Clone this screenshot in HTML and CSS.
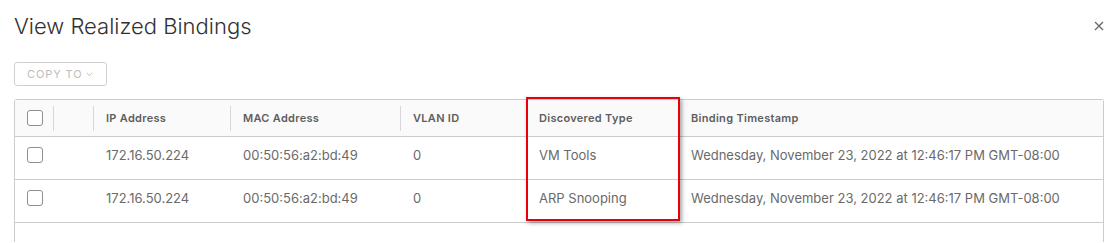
FILE: index.html
```html
<!DOCTYPE html>
<html>
<head>
<meta charset="utf-8">
<link rel="stylesheet" href="styles.css">
</head>
<body>
<div class="modal">
  <div class="modal-header">
    <h1 class="title">View Realized Bindings</h1>
    <button class="close" aria-label="Close">
      <svg width="10" height="10" viewBox="0 0 10 10"><path d="M1 1L9 9M9 1L1 9" stroke="#666" stroke-width="1.3" fill="none"/></svg>
    </button>
  </div>
  <div class="toolbar">
    <button class="btn-copy">COPY TO <svg width="7" height="5" viewBox="0 0 7 5"><path d="M0.8 1L3.5 3.6L6.2 1" stroke="#bdbdbd" stroke-width="1" fill="none"/></svg></button>
  </div>
  <div class="grid">
    <div class="row head">
      <div class="cell c-check"><span class="cb"></span></div>
      <div class="cell sep"></div>
      <div class="cell sep">IP Address</div>
      <div class="cell sep">MAC Address</div>
      <div class="cell sep">VLAN ID</div>
      <div class="cell sep">Discovered Type</div>
      <div class="cell sep">Binding Timestamp</div>
    </div>
    <div class="row">
      <div class="cell c-check"><span class="cb"></span></div>
      <div class="cell"></div>
      <div class="cell">172.16.50.224</div>
      <div class="cell">00:50:56:a2:bd:49</div>
      <div class="cell">0</div>
      <div class="cell">VM Tools</div>
      <div class="cell">Wednesday, November 23, 2022 at 12:46:17 PM GMT-08:00</div>
    </div>
    <div class="row">
      <div class="cell c-check"><span class="cb"></span></div>
      <div class="cell"></div>
      <div class="cell">172.16.50.224</div>
      <div class="cell">00:50:56:a2:bd:49</div>
      <div class="cell">0</div>
      <div class="cell">ARP Snooping</div>
      <div class="cell">Wednesday, November 23, 2022 at 12:46:17 PM GMT-08:00</div>
    </div>
    <div class="row empty"></div>
    <div class="highlight"></div>
  </div>
</div>
</body>
</html>
```

FILE: styles.css
```css
html, body {
  margin: 0;
  padding: 0;
  background: #fff;
  overflow: hidden;
}
body {
  font-family: Inter, "Open Sans", sans-serif;
  color: #565656;
}
.modal {
  padding: 0 15px 0 14px;
}
.modal-header {
  display: flex;
  justify-content: space-between;
  align-items: flex-start;
  height: 50px;
}
.title {
  margin: 12px 0 0 0;
  font-weight: 300;
  font-size: 22px;
  line-height: 28px;
  color: #313131;
  letter-spacing: 0;
}
.close {
  margin: 21px 0 0 0;
  padding: 0;
  border: 0;
  background: none;
  width: 10px;
  height: 10px;
  display: flex;
}
.toolbar {
  height: 49px;
  padding-top: 12px;
  box-sizing: border-box;
}
.btn-copy {
  box-sizing: border-box;
  width: 93px;
  height: 24px;
  border: 1px solid #cfcfcf;
  border-radius: 3px;
  background: #fff;
  color: #bdbdbd;
  font-family: Inter, sans-serif;
  font-size: 11px;
  letter-spacing: 0.9px;
  padding: 0 0 0 12px;
  display: flex;
  align-items: center;
  gap: 3px;
}
.grid {
  position: relative;
  border: 1px solid #cccccc;
  border-bottom: 0;
  border-radius: 3px 3px 0 0;
  height: 143px;
  box-sizing: border-box;
}
.row {
  display: grid;
  grid-template-columns: 38px 40px 137px 170px 126px 152px 1fr;
  height: 42px;
  border-bottom: 1px solid #cccccc;
  font-size: 13px;
}
.row.head {
  height: 36px;
  background: #fafafa;
  font-size: 11px;
  font-weight: 600;
  color: #666666;
  letter-spacing: 0.3px;
  align-items: center;
}
.cell {
  padding: 10px 0 0 13px;
  line-height: 16px;
  white-space: nowrap;
  color: #6a6a6a;
}
.row.head .cell {
  padding: 0 0 0 12px;
  height: 25px;
  display: flex;
  align-items: center;
  color: #5e5e5e;
}
.row.head .c-check {
  padding-left: 12px;
}
.row.head .sep {
  border-left: 1px solid #d7d7d7;
}
.c-check {
  padding-top: 10px;
  padding-left: 12px;
}
.cb {
  display: block;
  box-sizing: border-box;
  width: 16px;
  height: 16px;
  border: 1px solid #8f8f8f;
  border-radius: 3px;
  background: #fff;
}
.row.empty {
  border-bottom: 0;
  height: 20px;
}
.highlight {
  position: absolute;
  left: 511px;
  top: -3px;
  width: 154px;
  height: 124px;
  box-sizing: border-box;
  border: 2px solid #e8000b;
  box-shadow: 2px 2px 4px rgba(0, 0, 0, 0.35);
}
```
